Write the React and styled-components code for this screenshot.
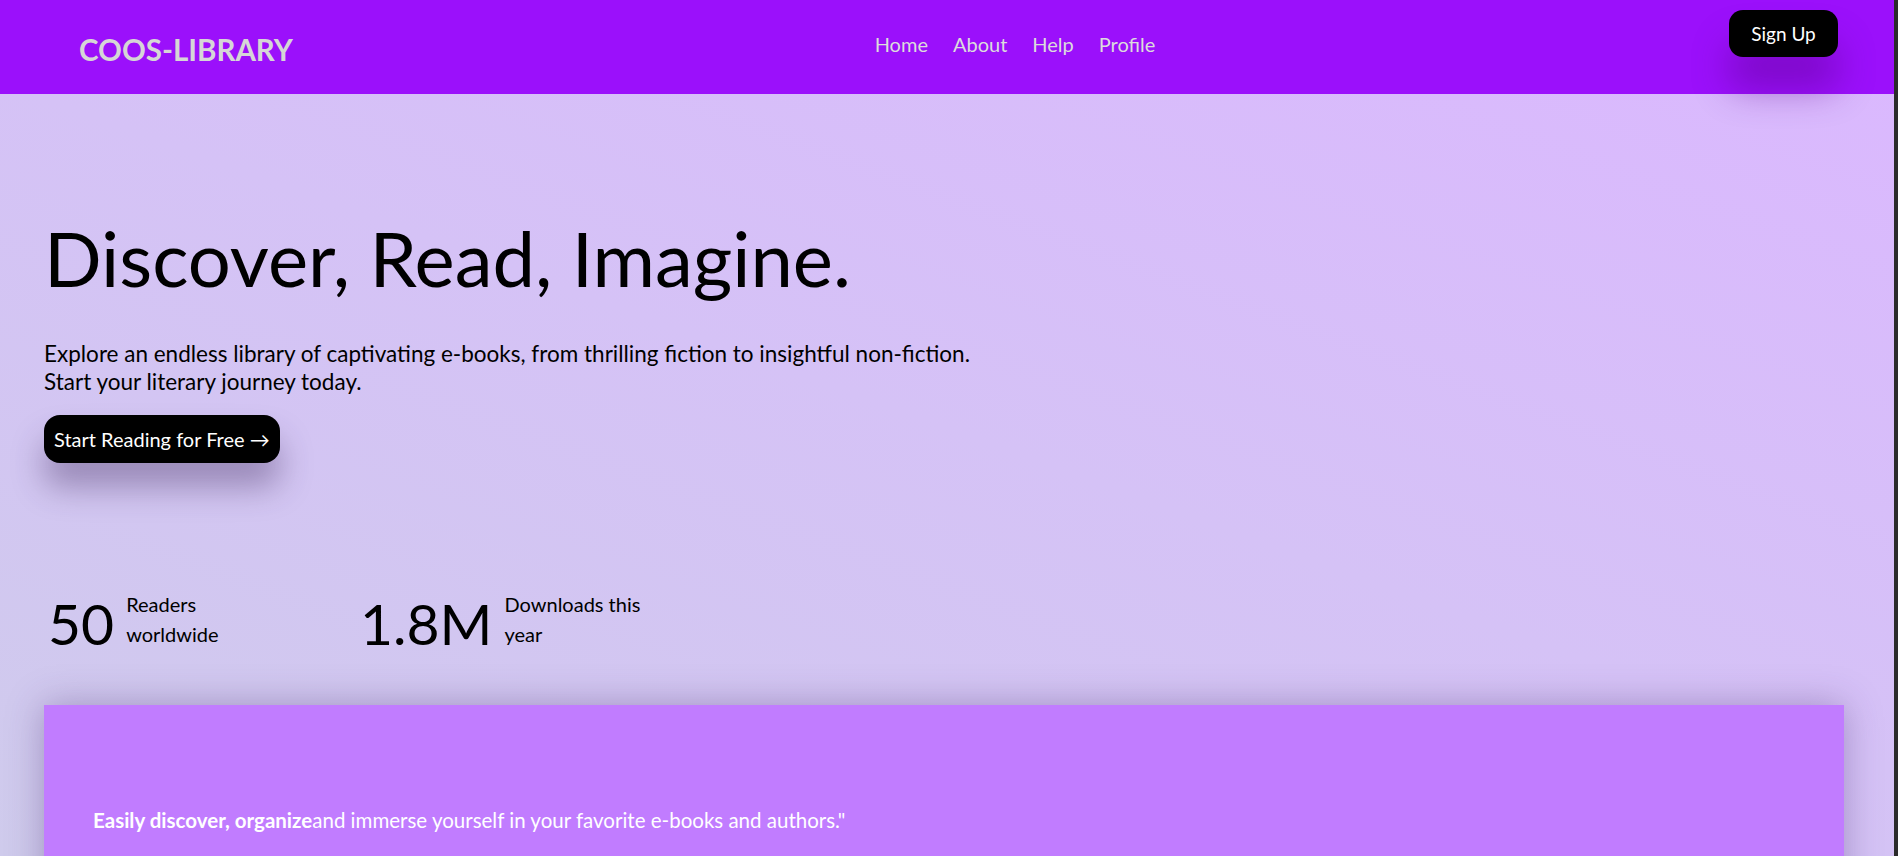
import React from "react";
import styled, { createGlobalStyle } from "styled-components";

const GlobalStyle = createGlobalStyle`
  html, body {
    margin: 0;
    padding: 0;
  }
  body {
    font-family: Lato, "Noto Sans", sans-serif;
    background: linear-gradient(20deg, #cfcbec 0%, #d5c2f6 50%, #dbb7ff 100%);
    background-attachment: fixed;
    color: #000;
    padding-right: 4px;
  }
  body::after {
    content: "";
    position: fixed;
    top: 0;
    right: 0;
    width: 4px;
    height: 100%;
    background: #2b2b2b;
  }
`;

const Header = styled.header`
  height: 94px;
  background: #9b10fb;
  display: flex;
  align-items: flex-start;
  justify-content: space-between;
  padding: 0 56px 0 79px;
  box-sizing: border-box;
`;

const Logo = styled.h1`
  margin: 33px 0 0;
  font-size: 29.5px;
  line-height: 34px;
  font-weight: 700;
  color: #d6d6d6;
`;

const Nav = styled.nav`
  display: flex;
  gap: 25px;
  margin: 30px 0 0 8px;
`;

const NavLink = styled.a`
  color: #dcdcdc;
  font-size: 20px;
  line-height: 28px;
  text-decoration: none;
  cursor: pointer;
`;

const SignUp = styled.button`
  margin-top: 10px;
  width: 109px;
  height: 47px;
  border: none;
  border-radius: 14px;
  background: #000;
  color: #fff;
  font-family: inherit;
  font-size: 19px;
  box-shadow: 0 32px 36px rgba(90, 0, 140, 0.45);
  cursor: pointer;
`;

const Main = styled.main`
  padding: 0 50px 0 44px;
`;

const Hero = styled.section`
  padding-top: 114px;
`;

const Title = styled.h2`
  margin: 0;
  font-size: 76px;
  line-height: 100px;
  font-weight: 400;
`;

const Lead = styled.p`
  margin: 32px 0 0;
  font-size: 22.5px;
  line-height: 28px;
  max-width: 960px;
`;

const CTA = styled.button`
  margin-top: 19px;
  height: 48px;
  padding: 0 10px;
  border: none;
  border-radius: 16px;
  background: #000;
  color: #fff;
  font-family: inherit;
  font-size: 20px;
  box-shadow: 0 24px 32px rgba(60, 40, 90, 0.38);
  cursor: pointer;
`;

const Stats = styled.div`
  display: grid;
  grid-template-columns: 312px 312px;
  margin-top: 130px;
  padding-left: 4px;
`;

const Stat = styled.div`
  display: flex;
  align-items: flex-start;
  gap: 12px;
`;

const StatValue = styled.span`
  font-size: 57px;
  line-height: 64px;
  margin-top: -2px;
`;

const StatLabel = styled.span`
  font-size: 20px;
  line-height: 30px;
  max-width: 150px;
  margin-top: -4px;
`;

const Panel = styled.section`
  margin-top: 50px;
  background: #c17cff;
  height: 420px;
  padding: 101px 49px 0;
  box-sizing: border-box;
  box-shadow: 0 0 34px rgba(70, 40, 110, 0.35);
  color: #fff;
  font-size: 20.5px;
  line-height: 28px;
`;

const Strong = styled.strong`
  font-weight: 700;
`;

export default function App() {
  return (
    <>
      <GlobalStyle />
      <Header>
        <Logo>COOS-LIBRARY</Logo>
        <Nav>
          <NavLink>Home</NavLink>
          <NavLink>About</NavLink>
          <NavLink>Help</NavLink>
          <NavLink>Profile</NavLink>
        </Nav>
        <SignUp>Sign Up</SignUp>
      </Header>
      <Main>
        <Hero>
          <Title>Discover, Read, Imagine.</Title>
          <Lead>
            Explore an endless library of captivating e-books, from thrilling
            fiction to insightful non-fiction. Start your literary journey
            today.
          </Lead>
          <CTA>Start Reading for Free →</CTA>
        </Hero>
        <Stats>
          <Stat>
            <StatValue>50</StatValue>
            <StatLabel>Readers worldwide</StatLabel>
          </Stat>
          <Stat>
            <StatValue>1.8M</StatValue>
            <StatLabel>Downloads this year</StatLabel>
          </Stat>
        </Stats>
        <Panel>
          <Strong>Easily discover, organize</Strong>and immerse yourself in
          your favorite e-books and authors."
        </Panel>
      </Main>
    </>
  );
}
